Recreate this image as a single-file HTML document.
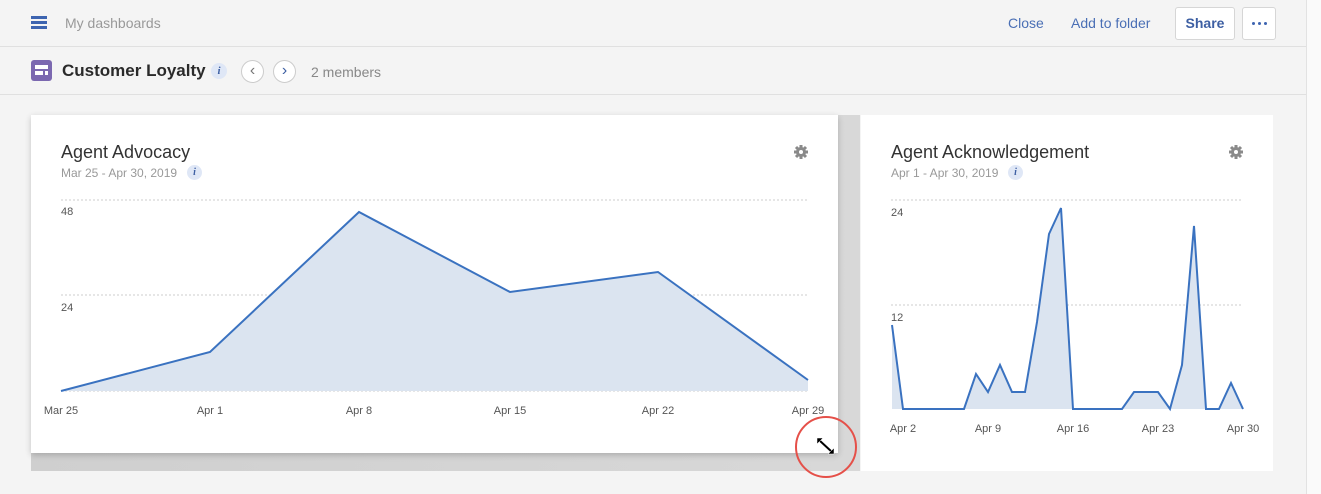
<!DOCTYPE html>
<html><head><meta charset="utf-8"><style>
body{margin:0;width:1321px;height:494px;background:#f4f4f4;font-family:"Liberation Sans",sans-serif;position:relative;overflow:hidden}
.a{position:absolute}
.t{color:#333}
</style></head><body>
<div class="a" style="left:1306px;top:0;width:1px;height:494px;background:#e2e2e2"></div>
<div class="a" style="left:1307px;top:0;width:14px;height:494px;background:#fafafa"></div>
<div class="a" style="left:0;top:46px;width:1306px;height:1px;background:#e0e0e0"></div>
<div class="a" style="left:0;top:94px;width:1306px;height:1px;background:#e0e0e0"></div>
<!-- top bar -->
<div class="a" style="left:31px;top:16px;width:16px;height:3px;background:#3d64b0;box-shadow:0 5px 0 #3d64b0,0 10px 0 #3d64b0"></div>
<div class="a" style="left:65px;top:15px;font-size:14px;color:#999">My dashboards</div>
<div class="a" style="left:1008px;top:15px;font-size:14px;color:#4a6fb5">Close</div>
<div class="a" style="left:1071px;top:15px;font-size:14px;color:#4a6fb5">Add to folder</div>
<div class="a" style="left:1175px;top:7px;width:60px;height:33px;border:1px solid #d6d6d6;border-radius:3px;background:#fff;box-sizing:border-box;text-align:center;line-height:31px;font-size:14px;font-weight:bold;color:#3d5fa3">Share</div>
<div class="a" style="left:1242px;top:7px;width:34px;height:33px;border:1px solid #d6d6d6;border-radius:3px;background:#fff;box-sizing:border-box"></div>
<div class="a" style="left:1252px;top:22px;width:3px;height:3px;border-radius:50%;background:#3d64b0;box-shadow:6px 0 0 #3d64b0,12px 0 0 #3d64b0"></div>
<!-- title row -->
<div class="a" style="left:31px;top:60px;width:21px;height:21px;border-radius:3px;background:#7b68b0"></div>
<div class="a" style="left:35px;top:65px;width:13px;height:4px;background:#fff"></div>
<div class="a" style="left:35px;top:71px;width:8px;height:4px;background:#fff"></div>
<div class="a" style="left:45px;top:71px;width:3px;height:4px;background:#fff"></div>
<div class="a t" style="left:62px;top:61px;font-size:17px;font-weight:bold;color:#2a2a2a">Customer Loyalty</div>
<div class="a" style="left:211px;top:63px;width:16px;height:16px;border-radius:50%;background:#dfe7f6;color:#3d5fa3;font:italic bold 11px 'Liberation Serif',serif;text-align:center;line-height:16px">i</div>
<div class="a" style="left:241px;top:60px;width:23px;height:23px;border:1px solid #ccc;border-radius:50%;background:#fff;box-sizing:border-box;text-align:center;line-height:19px;color:#777;font-size:16px">&#8249;</div>
<div class="a" style="left:273px;top:60px;width:23px;height:23px;border:1px solid #ccc;border-radius:50%;background:#fff;box-sizing:border-box;text-align:center;line-height:19px;color:#3d5fa3;font-size:16px">&#8250;</div>
<div class="a" style="left:311px;top:64px;font-size:14px;color:#888">2 members</div>
<!-- cards -->
<div class="a" style="left:31px;top:115px;width:829px;height:356px;background:linear-gradient(90deg,#cfcfcf,#d8d8d8)"></div>
<div class="a" style="left:31px;top:115px;width:807px;height:338px;background:#fff;box-shadow:0 2px 6px rgba(0,0,0,.2)"></div>
<div class="a" style="left:861px;top:115px;width:412px;height:356px;background:#fff"></div>
<div class="a t" style="left:61px;top:142px;font-size:18px">Agent Advocacy</div>
<div class="a" style="left:61px;top:166px;font-size:12px;color:#999">Mar 25 - Apr 30, 2019</div>
<div class="a" style="left:187px;top:165px;width:15px;height:15px;border-radius:50%;background:#dfe7f6;color:#3d5fa3;font:italic bold 10px 'Liberation Serif',serif;text-align:center;line-height:15px">i</div>
<div class="a t" style="left:891px;top:142px;font-size:18px">Agent Acknowledgement</div>
<div class="a" style="left:891px;top:166px;font-size:12px;color:#999">Apr 1 - Apr 30, 2019</div>
<div class="a" style="left:1008px;top:165px;width:15px;height:15px;border-radius:50%;background:#dfe7f6;color:#3d5fa3;font:italic bold 10px 'Liberation Serif',serif;text-align:center;line-height:15px">i</div>
<svg class="a" style="left:0;top:0" width="1321" height="494">
<g fill="#8a8a8a"><circle cx="801" cy="152" r="5"/><circle cx="1236" cy="152" r="5"/></g>
<g stroke="#8a8a8a" stroke-width="3"><path d="M801 145v14M794 152h14M796 147l10 10M806 147l-10 10"/><path d="M1236 145v14M1229 152h14M1231 147l10 10M1241 147l-10 10"/></g>
<g fill="#fff"><circle cx="801" cy="152" r="2"/><circle cx="1236" cy="152" r="2"/></g>
<g stroke="#ccc" stroke-dasharray="2 2" stroke-width="1"><path d="M61 200H808M61 295H808M61 391H808M891 200H1243M891 305H1243"/></g>
<path d="M61 391L210 352L359 212L510 292L658 272L808 380L808 391Z" fill="#dbe4f0"/>
<path d="M61 391L210 352L359 212L510 292L658 272L808 380" fill="none" stroke="#3a72c0" stroke-width="2"/>
<path d="M892 325L903 409L964 409L976 374L988 392L1000 365L1012 392L1025 392L1037 322L1049 234L1061 208L1073 409L1122 409L1134 392L1158 392L1170 409L1182 365L1194 226L1206 409L1219 409L1231 383L1243 409L892 409Z" fill="#dbe4f0"/>
<path d="M892 325L903 409L964 409L976 374L988 392L1000 365L1012 392L1025 392L1037 322L1049 234L1061 208L1073 409L1122 409L1134 392L1158 392L1170 409L1182 365L1194 226L1206 409L1219 409L1231 383L1243 409" fill="none" stroke="#3a72c0" stroke-width="2"/>
<g font-family="Liberation Sans" font-size="11" fill="#555">
<text x="61" y="215">48</text><text x="61" y="311">24</text>
<text x="891" y="216">24</text><text x="891" y="321">12</text>
<g text-anchor="middle"><text x="61" y="414">Mar 25</text><text x="210" y="414">Apr 1</text><text x="359" y="414">Apr 8</text><text x="510" y="414">Apr 15</text><text x="658" y="414">Apr 22</text><text x="808" y="414">Apr 29</text>
<text x="903" y="432">Apr 2</text><text x="988" y="432">Apr 9</text><text x="1073" y="432">Apr 16</text><text x="1158" y="432">Apr 23</text><text x="1243" y="432">Apr 30</text></g></g>
<path d="M819 440L832 452" stroke="#000" stroke-width="2"/>
<path d="M817 438h6l-6 6zM834 454h-6l6-6z" fill="#000" stroke="#fff" stroke-width=".5"/>
<circle cx="826" cy="447" r="30" fill="none" stroke="#e55049" stroke-width="2"/>
</svg>
</body></html>
